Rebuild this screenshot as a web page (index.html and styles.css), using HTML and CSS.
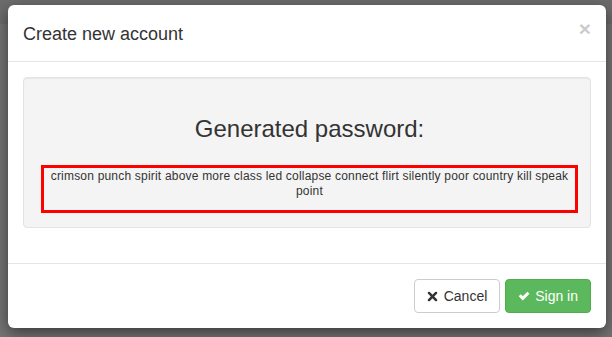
FILE: index.html
```html
<!DOCTYPE html>
<html>
<head>
  <title>Create new account</title>
  <link rel="stylesheet" href="styles.css">
</head>
<body>
  <!-- Backdrop with the dialog -->
  <div class="backdrop">
    <div class="modal">
      <div class="modal-header">
        <span class="close">&times;</span>
        <h4 class="modal-title">Create new account</h4>
      </div>

      <div class="modal-body">
        <div class="well">
          <h3 class="well-title">Generated password:</h3>
          <div class="password-box">crimson punch spirit above more class led collapse connect flirt silently poor country kill speak point</div>
        </div>
      </div>

      <div class="modal-footer">
        <button class="btn btn-default">
          <svg class="icon" viewBox="0 0 14 14"><path d="M2.5 2.5 L11.5 11.5 M11.5 2.5 L2.5 11.5" stroke="#333" stroke-width="3.2" stroke-linecap="round"/></svg>
          Cancel
        </button>
        <button class="btn btn-success">
          <svg class="icon" viewBox="0 0 14 14"><polygon points="0.8,7.4 3.2,5 5.6,7.4 11,2 13.4,4.4 5.6,12.2" fill="#fff"/></svg>
          Sign in
        </button>
      </div>
    </div>
  </div>
</body>
</html>
```

FILE: styles.css
```css
body {
  margin: 0;
  padding: 0;
  font-family: 'Liberation Sans', Arial, sans-serif;
  font-size: 14px;
  color: #333;
  background: linear-gradient(#6c6c6c 0, #6c6c6c 24px, #747474 24px);
  height: 337px;
  overflow: hidden;
}

.backdrop {
  padding: 5px 6px 0 8px;
}

.modal {
  width: 598px;
  background-color: white;
  border-radius: 6px;
  box-shadow: 0 5px 15px rgba(0,0,0,0.5);
}

.modal-header {
  padding: 17px 15px 13px;
  border-bottom: 1px solid #e5e5e5;
}

.modal-title {
  margin: 0;
  font-size: 18px;
  font-weight: normal;
  line-height: 1.42857;
}

.close {
  float: right;
  font-size: 21px;
  font-weight: bold;
  line-height: 1;
  color: #000;
  opacity: 0.2;
  margin-top: -4px;
}

.modal-body {
  padding: 15px;
}

.well {
  background-color: #f4f4f4;
  border: 1px solid #e3e3e3;
  border-radius: 4px;
  box-shadow: inset 0 1px 1px rgba(0,0,0,0.05);
  padding: 19px 12px 14px 17px;
  margin-bottom: 20px;
  text-align: center;
}

.well-title {
  font-size: 24px;
  font-weight: normal;
  line-height: 1.1;
  margin: 19px 0 23px;
}

.password-box {
  border: 3px solid #ff0000;
  padding: 1px 6px 11px;
  font-size: 12px;
  line-height: 15px;
  letter-spacing: 0.2px;
}

.modal-footer {
  padding: 15px;
  border-top: 1px solid #e5e5e5;
  text-align: right;
  font-size: 0;
}

.btn {
  display: inline-block;
  font-family: inherit;
  font-size: 14px;
  line-height: 20px;
  padding: 6px 12px;
  border: 1px solid transparent;
  border-radius: 4px;
  margin-left: 5px;
  cursor: pointer;
  vertical-align: middle;
}

.btn-default {
  background-color: white;
  border-color: #ccc;
  color: #333;
}

.btn-success {
  background-color: #5cb85c;
  border-color: #4cae4c;
  color: white;
}

.icon {
  width: 12px;
  height: 12px;
  vertical-align: -1px;
  margin-right: 1px;
}

.btn-default .icon {
  width: 11px;
  height: 11px;
  margin-right: 2px;
}
```
